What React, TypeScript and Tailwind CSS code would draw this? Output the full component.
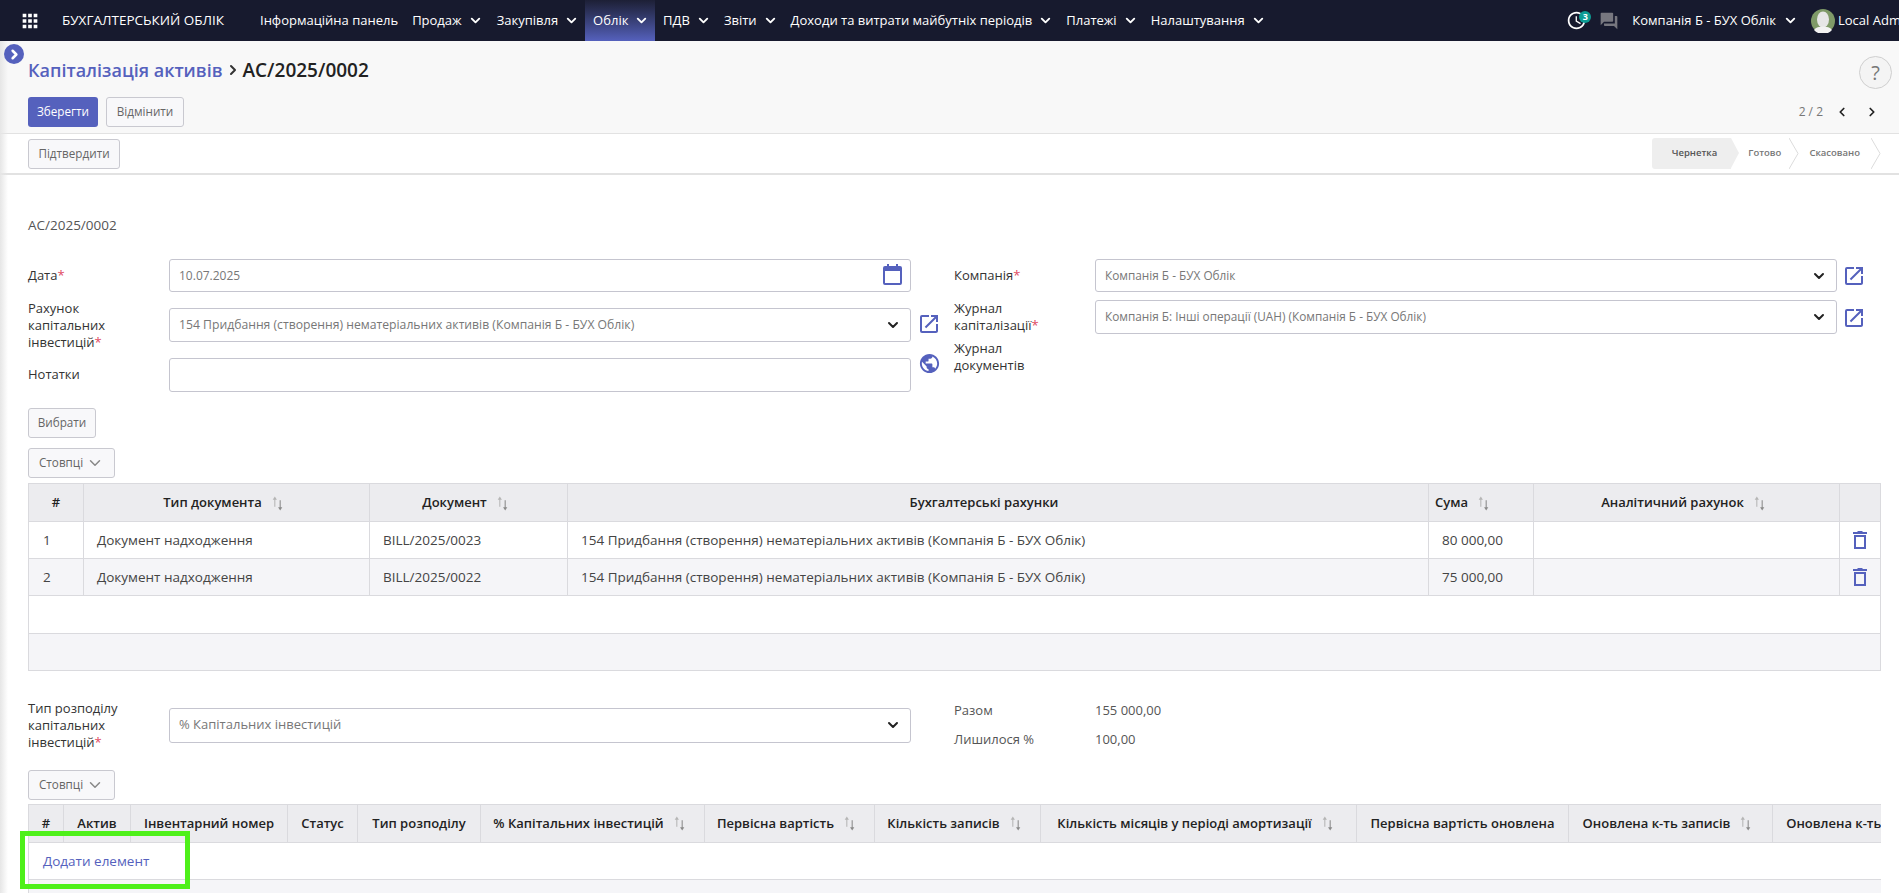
import { ChevronDown, ChevronLeft, ChevronRight } from "lucide-react";
import { MdApps, MdOpenInNew, MdPublic, MdForum, MdOutlineWatchLater } from "react-icons/md";

const navItemsAfter = ["ПДВ", "Звіти", "Доходи та витрати майбутніх періодів", "Платежі", "Налаштування"];

const Caret = ({ className = "" }: { className?: string }) => (
  <ChevronDown className={"w-[15px] h-[15px] stroke-[3] " + className} />
);

const SortArrows = () => (
  <svg viewBox="0 0 12 14" className="inline-block w-[13px] h-[15px] ml-[9px] mr-[6px] align-middle">
    <path d="M3.5 10V2" stroke="#b5b5b5" strokeWidth="1" />
    <path d="M1.5 3.5L3.5 .5l2 3z" fill="#b5b5b5" />
    <path d="M8.5 4v8" stroke="#8a8a8a" strokeWidth="1" />
    <path d="M6.5 10.5l2 3 2-3z" fill="#8a8a8a" />
  </svg>
);

const Req = () => <span className="text-[#e04a5f]">*</span>;

const Btn = ({ children, className = "" }: { children: React.ReactNode; className?: string }) => (
  <button className={"h-[30px] px-[10px] rounded-[3px] border border-[#c9c9d0] bg-[#f8f8fa] text-[11.7px] text-[#666] flex items-center " + className}>
    {children}
  </button>
);

const Field = ({
  value,
  h,
  size = "text-[12px]",
  select = false,
  className = "",
}: {
  value: string;
  h: string;
  size?: string;
  select?: boolean;
  className?: string;
}) => (
  <div className={"flex items-center justify-between bg-white border border-[#c5c5cf] rounded-[3px] pl-[9px] pr-[9px] text-[#777] " + size + " " + h + " " + className}>
    <span>{value}</span>
    {select && <ChevronDown className="w-[16px] h-[16px] stroke-[3] text-[#222]" />}
  </div>
);

const OpenIcon = () => <MdOpenInNew className="w-[24px] h-[24px] text-[#5561bd]" />;

const CalendarIcon = () => (
  <svg viewBox="0 0 19 21" className="w-[19px] h-[21px]">
    <path d="M4 0h2v3H4zM13 0h2v3h-2z" fill="#5561bd" />
    <rect x="1" y="3" width="17" height="17" rx="1" fill="none" stroke="#5561bd" strokeWidth="2" />
    <rect x="1" y="3" width="17" height="4" fill="#5561bd" />
  </svg>
);

const TrashIcon = () => (
  <svg viewBox="0 0 14 18" className="w-[14px] h-[18px] mx-auto">
    <path d="M4.5 0h5v1h-5z" fill="#5561bd" />
    <path d="M0 1h14v2H0z" fill="#5561bd" />
    <rect x="2" y="5" width="10" height="12" fill="none" stroke="#5561bd" strokeWidth="2" />
  </svg>
);

const Avatar = () => (
  <svg viewBox="0 0 24 24" className="w-[24px] h-[24px] mr-[3px]">
    <circle cx="12" cy="12" r="12" fill="#7f9a68" />
    <ellipse cx="12" cy="10.5" rx="6" ry="8" fill="#e6e6e6" />
    <path d="M3 21c2-3 5-3.5 9-3.5s7 .5 9 3.5a12 12 0 0 1-18 0z" fill="#f2f2f2" />
  </svg>
);

const docRows = [
  { n: "1", doc: "BILL/2025/0023", sum: "80 000,00", bg: "bg-white" },
  { n: "2", doc: "BILL/2025/0022", sum: "75 000,00", bg: "bg-[#f5f5f8]" },
];

const assetCols = [
  { label: "#", w: "w-[35px]" },
  { label: "Актив", w: "w-[67px]" },
  { label: "Інвентарний номер", w: "w-[157px]" },
  { label: "Статус", w: "w-[70px]" },
  { label: "Тип розподілу", w: "w-[123px]" },
  { label: "% Капітальних інвестицій", w: "w-[224px]", sort: true },
  { label: "Первісна вартість", w: "w-[170px]", sort: true },
  { label: "Кількість записів", w: "w-[166px]", sort: true },
  { label: "Кількість місяців у періоді амортизації", w: "w-[316px]", sort: true },
  { label: "Первісна вартість оновлена", w: "w-[212px]" },
  { label: "Оновлена к-ть записів", w: "w-[204px]", sort: true },
  { label: "Оновлена к-ть записів у періоді", w: "w-[236px]" },
];

const cell = "border border-[#dadade]";

export default function App() {
  return (
    <div className="relative h-[893px] w-[1899px] overflow-hidden bg-white text-[13px] text-[#333] font-['Open_Sans',sans-serif]">
      {/* top bar */}
      <header className="h-[41px] bg-[#171a2e] text-white flex items-center pl-[19px] overflow-hidden whitespace-nowrap">
        <MdApps className="w-[22px] h-[22px] mr-[21px]" />
        <span className="w-[198px] text-[13.5px] font-medium">БУХГАЛТЕРСЬКИЙ ОБЛІК</span>
        <span>Інформаційна панель</span>
        <span className="flex items-center gap-[6px] ml-[14px]">
          Продаж
          <Caret />
        </span>
        <span className="flex items-center gap-[6px] ml-[14px]">
          Закупівля
          <Caret />
        </span>
        <span className="ml-[6px] h-full w-[70px] flex items-center gap-[6px] pl-[8px] bg-gradient-to-b from-[#1d2036] to-[#5561bd]">
          Облік
          <Caret />
        </span>
        {navItemsAfter.map((label) => (
          <span key={label} className="flex items-center gap-[6px] ml-[8px] mr-[5px]">
            {label}
            <Caret />
          </span>
        ))}
        <div className="ml-auto flex items-center">
          <span className="relative">
            <MdOutlineWatchLater className="w-[21px] h-[21px]" />
            <span className="absolute top-[1px] left-[13px] w-[12px] h-[12px] rounded-full bg-[#0d9c94] text-[9px] leading-[12px] text-center font-bold">3</span>
          </span>
          <MdForum className="w-[20px] h-[20px] text-[#77777f] ml-[12px] mr-[13px]" />
          <span>Компанія Б - БУХ Облік</span>
          <Caret className="ml-[7px] mr-[13px]" />
          <Avatar />
          <span className="w-[61px] overflow-hidden">Local Admin</span>
        </div>
      </header>

      {/* left edge shadow */}
      <div className="absolute left-0 top-[41px] bottom-0 w-[8px] bg-gradient-to-r from-[#e6e6e6] to-transparent" />
      <span className="absolute left-[4px] top-[44px] w-[20px] h-[20px] rounded-full bg-[#5561bd] flex items-center justify-center text-white">
        <ChevronRight className="w-[15px] h-[15px] stroke-[4]" />
      </span>

      {/* control panel */}
      <section className="h-[93px] bg-[#f8f8f8] border-b border-[#e2e2e2] pl-[28px] pr-[7px] pt-[15px]">
        <div className="flex items-start justify-between h-[41px]">
          <h1 className="text-[18px] font-semibold leading-[28px] flex items-center">
            <span className="text-[#5561bd]">Капіталізація активів</span>
            <ChevronRight className="w-[16px] h-[16px] stroke-[3] mx-[2px]" />
            <span className="text-[19px] text-[#222]">AC/2025/0002</span>
          </h1>
          <span className="w-[33px] h-[33px] rounded-full border border-[#cfcfcf] bg-[#f4f4f4] flex items-center justify-center text-[20px] text-[#777]">?</span>
        </div>
        <div className="flex items-center">
          <button className="h-[30px] w-[70px] rounded-[3px] bg-[#5561bd] text-white text-[11.7px]">Зберегти</button>
          <Btn className="ml-[8px] w-[78px] justify-center">Відмінити</Btn>
          <div className="ml-auto flex items-center text-[12px] text-[#777]">
            <span className="mr-[12px]">2 / 2</span>
            <ChevronLeft className="w-[14px] h-[14px] stroke-[3] text-[#222] mr-[16px]" />
            <ChevronRight className="w-[14px] h-[14px] stroke-[3] text-[#222] mr-[13px]" />
          </div>
        </div>
      </section>

      {/* status bar */}
      <section className="h-[41px] border-b-2 border-[#e2e2e2] pl-[28px] flex items-center justify-between">
        <Btn className="w-[92px] justify-center">Підтвердити</Btn>
        <div className="flex items-center h-[31px] text-[9.5px] font-semibold text-[#777] pr-[18px]">
          <span className="relative h-full w-[79px] bg-[#eeeeee] rounded-l-[3px] flex items-center justify-end pr-[14px] text-[#555]">
            Чернетка
            <span className="absolute left-full top-0 w-0 h-0 border-y-[15.5px] border-y-transparent border-l-[8px] border-l-[#eeeeee]" />
          </span>
          <span className="ml-[17px]">Готово</span>
          <svg viewBox="0 0 10 31" className="w-[10px] h-[31px] ml-[8px]"><path d="M0 0l9 15.5L0 31" fill="none" stroke="#dcdcdc" /></svg>
          <span className="ml-[10px]">Скасовано</span>
          <svg viewBox="0 0 10 31" className="w-[10px] h-[31px] ml-[11px]"><path d="M0 0l9 15.5L0 31" fill="none" stroke="#dcdcdc" /></svg>
        </div>
      </section>

      <main className="pl-[28px] pr-[18px] pt-[40px]">
        <div className="text-[13.5px] text-[#555] leading-[20px]">AC/2025/0002</div>

        {/* form */}
        <div className="mt-[24px] flex h-[133px]">
          <div className="w-[883px] flex flex-col gap-[16px] shrink-0">
            <div className="flex items-center h-[33px]">
              <label className="w-[141px]">Дата<Req /></label>
              <div className="relative w-[742px]">
                <Field value="10.07.2025" h="h-[33px]" />
                <span className="absolute right-[9px] top-[5px]"><CalendarIcon /></span>
              </div>
            </div>
            <div className="flex items-center h-[34px]">
              <label className="w-[141px] leading-[17px]">Рахунок<br />капітальних<br />інвестицій<Req /></label>
              <Field value="154 Придбання (створення) нематеріальних активів (Компанія Б - БУХ Облік)" h="h-[34px]" size="text-[12.2px]" select className="w-[742px]" />
            </div>
            <div className="flex items-center h-[34px]">
              <label className="w-[141px]">Нотатки</label>
              <Field value="" h="h-[34px]" className="w-[742px]" />
            </div>
          </div>
          <div className="w-[43px] shrink-0 relative">
            <span className="absolute left-[6px] top-[53px]"><OpenIcon /></span>
            <span className="absolute left-[7px] top-[93px]"><MdPublic className="w-[23px] h-[23px] text-[#5561bd]" /></span>
          </div>
          <div className="w-[141px] shrink-0 flex flex-col leading-[17px]">
            <label className="h-[33px] leading-[33px]">Компанія<Req /></label>
            <label className="mt-[8px] h-[34px]">Журнал<br />капіталізації<Req /></label>
            <label className="mt-[6px]">Журнал<br />документів</label>
          </div>
          <div className="w-[742px] shrink-0 flex flex-col gap-[8px]">
            <Field value="Компанія Б - БУХ Облік" h="h-[33px]" size="text-[11.8px]" select />
            <Field value="Компанія Б: Інші операції (UAH) (Компанія Б - БУХ Облік)" h="h-[34px]" size="text-[11.8px]" select />
          </div>
          <div className="pl-[5px] flex flex-col gap-[18px] pt-[5px]">
            <OpenIcon />
            <OpenIcon />
          </div>
        </div>

        <Btn className="mt-[16px] w-[68px] justify-center">Вибрати</Btn>
        <Btn className="mt-[10px] w-[87px] justify-between">
          Стовпці
          <ChevronDown className="w-[18px] h-[18px] text-[#888]" />
        </Btn>

        {/* documents table */}
        <table className="mt-[5px] w-[1853px] table-fixed border-collapse">
          <thead>
            <tr className="h-[38px] bg-[#ececef] text-[#222]">
              <th className={"w-[55px] font-semibold " + cell}>#</th>
              <th className={"w-[286px] font-semibold " + cell}>Тип документа<SortArrows /></th>
              <th className={"w-[198px] font-semibold " + cell}>Документ<SortArrows /></th>
              <th className={"w-[861px] font-semibold pr-[28px] " + cell}>Бухгалтерські рахунки</th>
              <th className={"w-[105px] font-semibold text-left pl-[6px] " + cell}>Сума<SortArrows /></th>
              <th className={"w-[306px] font-semibold " + cell}>Аналітичний рахунок<SortArrows /></th>
              <th className={cell}></th>
            </tr>
          </thead>
          <tbody className="text-[13.5px] text-[#444]">
            {docRows.map((r) => (
              <tr key={r.n} className={"h-[37px] " + r.bg}>
                <td className={"pl-[14px] " + cell}>{r.n}</td>
                <td className={"pl-[13px] " + cell}>Документ надходження</td>
                <td className={"pl-[13px] " + cell}>{r.doc}</td>
                <td className={"pl-[13px] " + cell}>154 Придбання (створення) нематеріальних активів (Компанія Б - БУХ Облік)</td>
                <td className={"pl-[13px] " + cell}>{r.sum}</td>
                <td className={cell}></td>
                <td className={cell}><TrashIcon /></td>
              </tr>
            ))}
            <tr className="h-[38px]"><td colSpan={7} className={cell}></td></tr>
            <tr className="h-[37px] bg-[#f5f5f8]"><td colSpan={7} className={cell}></td></tr>
          </tbody>
        </table>

        {/* distribution */}
        <div className="mt-[28px] flex items-center h-[52px]">
          <label className="w-[141px] leading-[17px]">Тип розподілу<br />капітальних<br />інвестицій<Req /></label>
          <Field value="% Капітальних інвестицій" h="h-[35px]" size="text-[13px]" select className="w-[742px]" />
          <div className="ml-[43px] flex flex-col gap-[12px] text-[#555]">
            <div className="flex h-[17px] items-center"><span className="w-[141px]">Разом</span><span>155 000,00</span></div>
            <div className="flex h-[17px] items-center"><span className="w-[141px]">Лишилося %</span><span>100,00</span></div>
          </div>
        </div>

        <Btn className="mt-[19px] w-[87px] justify-between">
          Стовпці
          <ChevronDown className="w-[18px] h-[18px] text-[#888]" />
        </Btn>

        {/* assets table */}
        <div className="mt-[4px] w-[1853px] overflow-hidden border-l border-[#dadade]">
          <div className="flex h-[39px] w-max bg-[#ececef] border-y border-[#dadade] font-semibold text-[#222]">
            {assetCols.map((c) => (
              <div key={c.label} className={"flex items-center justify-center shrink-0 border-r border-[#dadade] whitespace-nowrap " + c.w}>
                {c.label}
                {c.sort && <SortArrows />}
              </div>
            ))}
          </div>
          <div className="h-[37px] border-b border-[#dadade] flex items-center pl-[14px] text-[13.5px] text-[#5561bd]">Додати елемент</div>
          <div className="h-[20px] bg-[#f5f5f8]" />
        </div>
      </main>

      {/* annotation */}
      <div className="absolute left-[20px] top-[831px] w-[170px] h-[58px] border-[5px] border-[#4ef01a] pointer-events-none" />
    </div>
  );
}
